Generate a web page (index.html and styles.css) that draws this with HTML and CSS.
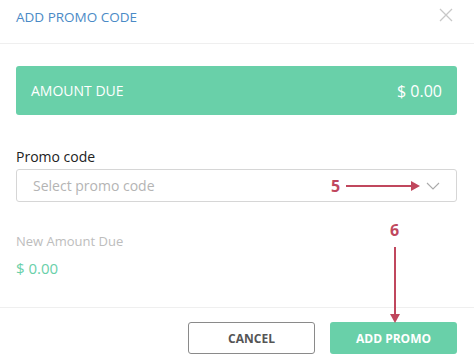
FILE: index.html
```html
<!DOCTYPE html>
<html lang="en">
<head>
    <meta charset="UTF-8">
    <title>Add Promo Code</title>
    <link rel="stylesheet" href="styles.css">
</head>
<body>
    <div class="modal">
        <div class="modal-header">
            <div class="modal-title">ADD PROMO CODE</div>
            <svg class="close-icon" width="14" height="14" viewBox="0 0 14 14">
                <path d="M1 1 L13 13 M13 1 L1 13" stroke="#c8c8c8" stroke-width="1.3" fill="none"/>
            </svg>
        </div>

        <div class="modal-body">
            <div class="amount-box">
                <span>AMOUNT DUE</span>
                <span class="amount-value">$ 0.00</span>
            </div>

            <label class="field-label">Promo code</label>
            <div class="select-box">
                <span class="placeholder">Select promo code</span>
                <svg class="chevron" width="14" height="8" viewBox="0 0 14 8">
                    <path d="M1 1 L7 7 L13 1" stroke="#aaa" stroke-width="1.1" fill="none"/>
                </svg>
                <!-- annotation 5 -->
                <div class="note note-5">
                    <span class="note-num">5</span>
                    <span class="arrow-h"></span>
                </div>
            </div>

            <div class="new-amount">
                <div class="new-amount-label">New Amount Due</div>
                <div class="new-amount-value">$ 0.00</div>
            </div>
        </div>

        <div class="modal-footer">
            <button class="btn btn-cancel">CANCEL</button>
            <button class="btn btn-add">ADD PROMO</button>
        </div>

        <!-- annotation 6 -->
        <div class="note note-6">
            <span class="note-num">6</span>
            <span class="arrow-v"></span>
        </div>
    </div>
</body>
</html>
```

FILE: styles.css
```css
body {
    margin: 0;
    background-color: #fff;
    font-family: "Open Sans", Arial, sans-serif;
}

.modal {
    position: relative;
    width: 474px;
    height: 362px;
}

.modal-header {
    display: flex;
    justify-content: space-between;
    align-items: center;
    height: 44px;
    padding: 0 21px 0 16px;
    border-bottom: 1px solid #efefef;
    box-sizing: border-box;
}

.modal-title {
    color: #4a8ac6;
    font-size: 13.5px;
    margin-top: -10px;
}

.close-icon {
    margin-top: -13px;
}

.modal-body {
    padding: 22px 17px 0 16px;
    height: 264px;
    box-sizing: border-box;
    border-bottom: 1px solid #efefef;
}

.amount-box {
    display: flex;
    justify-content: space-between;
    align-items: center;
    height: 49px;
    padding: 0 15px;
    background-color: #69d0a9;
    border-radius: 3px;
    color: #fff;
    font-size: 14px;
}

.amount-value {
    font-size: 16px;
}

.field-label {
    display: block;
    margin-top: 32px;
    color: #222;
    font-size: 14px;
    line-height: 20px;
}

.select-box {
    position: relative;
    display: flex;
    justify-content: space-between;
    align-items: center;
    height: 33px;
    margin-top: 2px;
    padding: 0 16px;
    border: 1px solid #d6d6d6;
    border-radius: 3px;
    box-sizing: border-box;
}

.placeholder {
    color: #b4b4b4;
    font-size: 14px;
}

.chevron {
    margin-top: 1px;
}

.note {
    position: absolute;
    color: #c0475d;
    font-weight: bold;
}

.note-num {
    font-size: 16px;
}

.note-5 {
    left: 314px;
    top: 5px;
    display: flex;
    align-items: center;
    gap: 6px;
}

.arrow-h {
    position: relative;
    width: 66px;
    height: 2px;
    background-color: #c0475d;
}

.arrow-h::after {
    content: "";
    position: absolute;
    right: -8px;
    top: -4px;
    border-left: 9px solid #c0475d;
    border-top: 5px solid transparent;
    border-bottom: 5px solid transparent;
}

.new-amount {
    margin-top: 30px;
}

.new-amount-label {
    color: #bdbdbd;
    font-size: 13px;
}

.new-amount-value {
    margin-top: 8px;
    color: #69d0a9;
    font-size: 15px;
}

.modal-footer {
    display: flex;
    justify-content: flex-end;
    gap: 15px;
    padding: 14px 17px 0 0;
}

.btn {
    width: 127px;
    height: 32px;
    border-radius: 3px;
    font-family: "Open Sans", Arial, sans-serif;
    font-size: 12px;
    font-weight: bold;
    cursor: pointer;
}

.btn-cancel {
    background-color: #fff;
    border: 1px solid #8a8a8a;
    color: #555;
}

.btn-add {
    background-color: #69d0a9;
    border: none;
    color: #fff;
}

.note-6 {
    left: 390px;
    top: 219px;
    display: flex;
    flex-direction: column;
    align-items: center;
}

.arrow-v {
    position: relative;
    width: 2px;
    height: 68px;
    margin-top: 6px;
    background-color: #c0475d;
}

.arrow-v::after {
    content: "";
    position: absolute;
    bottom: -8px;
    left: -4px;
    border-top: 9px solid #c0475d;
    border-left: 5px solid transparent;
    border-right: 5px solid transparent;
}
```
